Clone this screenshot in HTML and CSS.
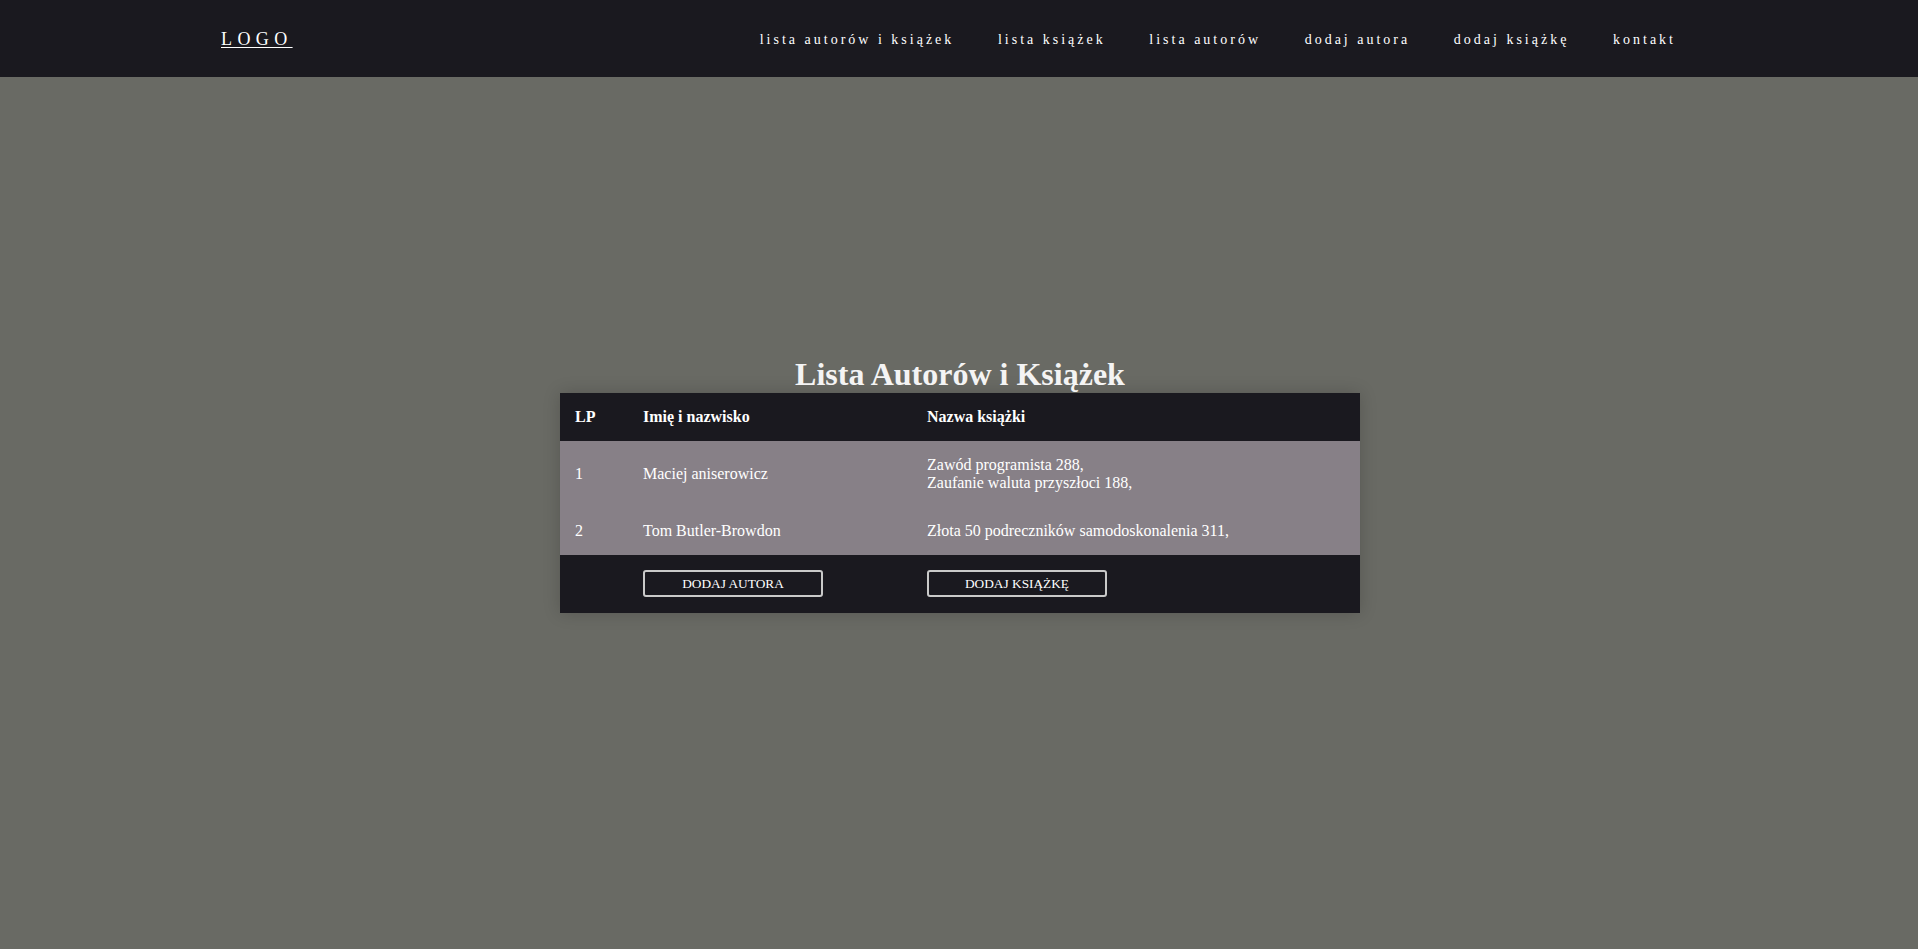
FILE: index.html
```html
<!DOCTYPE html>
<html lang="pl">
<head>
<meta charset="utf-8">
<title>Lista Autorów i Książek</title>
<link rel="stylesheet" href="styles.css">
</head>
<body>
<header class="topbar">
  <a class="logo" href="#">LOGO</a>
  <nav class="nav">
    <a href="#">lista autorów i książek</a>
    <a href="#">lista książek</a>
    <a href="#">lista autorów</a>
    <a href="#">dodaj autora</a>
    <a href="#">dodaj książkę</a>
    <a href="#">kontakt</a>
  </nav>
</header>
<main class="main">
  <h1 class="title">Lista Autorów i Książek</h1>
  <table class="list">
    <thead>
      <tr class="head-row">
        <th class="col-lp">LP</th>
        <th class="col-name">Imię i nazwisko</th>
        <th class="col-books">Nazwa książki</th>
      </tr>
    </thead>
    <tbody>
      <tr class="body-row">
        <td>1</td>
        <td>Maciej aniserowicz</td>
        <td>Zawód programista 288,<br>Zaufanie waluta przyszłoci 188,</td>
      </tr>
      <tr class="body-row">
        <td>2</td>
        <td>Tom Butler-Browdon</td>
        <td>Złota 50 podreczników samodoskonalenia 311,</td>
      </tr>
    </tbody>
    <tfoot>
      <tr class="foot-row">
        <td></td>
        <td><button class="btn" type="button">DODAJ AUTORA</button></td>
        <td><button class="btn" type="button">DODAJ KSIĄŻKĘ</button></td>
      </tr>
    </tfoot>
  </table>
</main>
</body>
</html>
```
FILE: styles.css
```css
html, body {
  margin: 0;
  padding: 0;
}
body {
  background: #696a64;
  font-family: "Liberation Serif", "Times New Roman", serif;
  color: #ffffff;
  min-height: 100vh;
}
.topbar {
  box-sizing: border-box;
  height: 77px;
  padding: 2px 242px 0 221px;
  background: #1a191f;
  display: flex;
  align-items: center;
  justify-content: space-between;
}
.logo {
  color: #ffffff;
  font-size: 18px;
  letter-spacing: 5.4px;
  text-decoration: underline;
  text-underline-offset: 2px;
}
.nav {
  display: flex;
  gap: 43.6px;
}
.nav a {
  color: #ffffff;
  font-size: 14px;
  letter-spacing: 3px;
  text-decoration: none;
}
.main {
  padding: 279px 0 0 2px;
}
.title {
  margin: 0;
  font-size: 32px;
  line-height: 37px;
  font-weight: bold;
  text-align: center;
  color: #f4f4f4;
}
.list {
  width: 800px;
  margin: 0 auto;
  border-collapse: collapse;
  border-spacing: 0;
  table-layout: fixed;
  background: #1a191f;
  box-shadow: 0 0 16px rgba(0, 0, 0, 0.18);
}
.list th,
.list td {
  box-sizing: border-box;
  padding: 15px;
  text-align: left;
  vertical-align: middle;
  font-size: 16px;
  line-height: 18px;
  color: #ffffff;
}
.list th {
  font-weight: bold;
}
.col-lp { width: 68px; }
.col-name { width: 284px; }
.col-books { width: 448px; }
.head-row { background: #1a191f; }
.body-row { background: #878087; }
.foot-row { background: #1a191f; }
.foot-row td {
  padding-top: 15px;
  padding-bottom: 16px;
}
.btn {
  display: block;
  box-sizing: border-box;
  width: 180px;
  height: 27px;
  padding: 0 6px;
  background: #1a191f;
  color: #ffffff;
  border: 2px solid #c9c9c9;
  border-radius: 3px;
  font-family: "Liberation Serif", "Times New Roman", serif;
  font-size: 13.333px;
  line-height: 23px;
  text-align: center;
}
```
